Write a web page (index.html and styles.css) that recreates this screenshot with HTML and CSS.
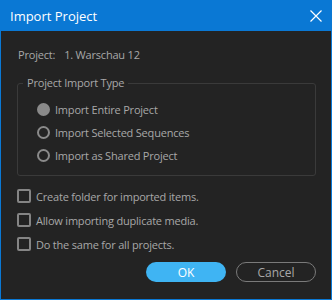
FILE: index.html
```html
<!DOCTYPE html>
<html>
<head>
<meta charset="utf-8">
<link rel="stylesheet" href="styles.css">
</head>
<body>
<div class="dialog">
  <div class="titlebar">
    <span class="title">Import Project</span>
    <svg class="close" width="12" height="12" viewBox="0 0 12 12"><path d="M0.5 0.5 L11.5 11.5 M11.5 0.5 L0.5 11.5" stroke="#fff" stroke-width="1.2" fill="none"/></svg>
  </div>
  <div class="content">
    <div class="project"><span class="plabel">Project:</span><span>1. Warschau 12</span></div>
    <fieldset class="group">
      <legend>Project Import Type</legend>
      <div class="radio"><span class="dot checked"></span>Import Entire Project</div>
      <div class="radio"><span class="dot"></span>Import Selected Sequences</div>
      <div class="radio"><span class="dot"></span>Import as Shared Project</div>
    </fieldset>
    <div class="checks">
      <div class="check"><span class="box"></span>Create folder for imported items.</div>
      <div class="check"><span class="box"></span>Allow importing duplicate media.</div>
      <div class="check"><span class="box"></span>Do the same for all projects.</div>
    </div>
    <div class="buttons">
      <button class="btn ok">OK</button>
      <button class="btn cancel">Cancel</button>
    </div>
  </div>
</div>
</body>
</html>
```
FILE: styles.css
```css
html, body {
  margin: 0;
  padding: 0;
  background: #232323;
}
.dialog {
  width: 332px;
  height: 300px;
  box-sizing: border-box;
  border: 1px solid #0a78d4;
  border-top: none;
  background: #232323;
  font-family: "Open Sans", sans-serif;
  color: #a8a8a8;
  display: flex;
  flex-direction: column;
}
.titlebar {
  height: 31px;
  background: #0a78d4;
  margin: 0 -1px;
  display: flex;
  align-items: center;
  justify-content: space-between;
  padding: 0 10px 0 10px;
}
.title {
  color: #fff;
  font-size: 13px;
}
.close {
  display: block;
}
.content {
  padding: 0 15px 0 16px;
  font-size: 11px;
  letter-spacing: -0.2px;
}
.project {
  margin-top: 16px;
  height: 16px;
  line-height: 16px;
  padding-left: 1px;
}
.plabel {
  margin-right: 9px;
}
.group {
  margin: 12px 0 0 0;
  padding: 7px 0 8px 0;
  border: 1px solid #3a3a3a;
  border-radius: 3px;
  min-width: 0;
}
.group legend {
  padding: 0 4px;
  margin-left: 5px;
  line-height: 16px;
}
.radio {
  display: flex;
  align-items: center;
  height: 23px;
  padding-left: 19px;
}
.dot {
  width: 9px;
  height: 9px;
  border: 2px solid #8a8a8a;
  border-radius: 50%;
  margin-right: 5px;
  flex: none;
}
.dot.checked {
  background: #8a8a8a;
}
.checks {
  margin-top: 8px;
}
.check {
  display: flex;
  align-items: center;
  height: 24px;
}
.box {
  width: 10px;
  height: 10px;
  border: 2px solid #858585;
  border-radius: 2px;
  margin-right: 5px;
  flex: none;
}
.buttons {
  display: flex;
  justify-content: flex-end;
  gap: 10px;
  margin-top: 6px;
}
.btn {
  width: 80px;
  height: 20px;
  border-radius: 10px;
  font-family: "Open Sans", sans-serif;
  font-size: 12px;
  padding: 0;
  box-sizing: border-box;
}
.ok {
  background: #3fb4f3;
  border: none;
  color: #fff;
}
.cancel {
  background: transparent;
  border: 1px solid #7a7a7a;
  color: #a8a8a8;
}
```
